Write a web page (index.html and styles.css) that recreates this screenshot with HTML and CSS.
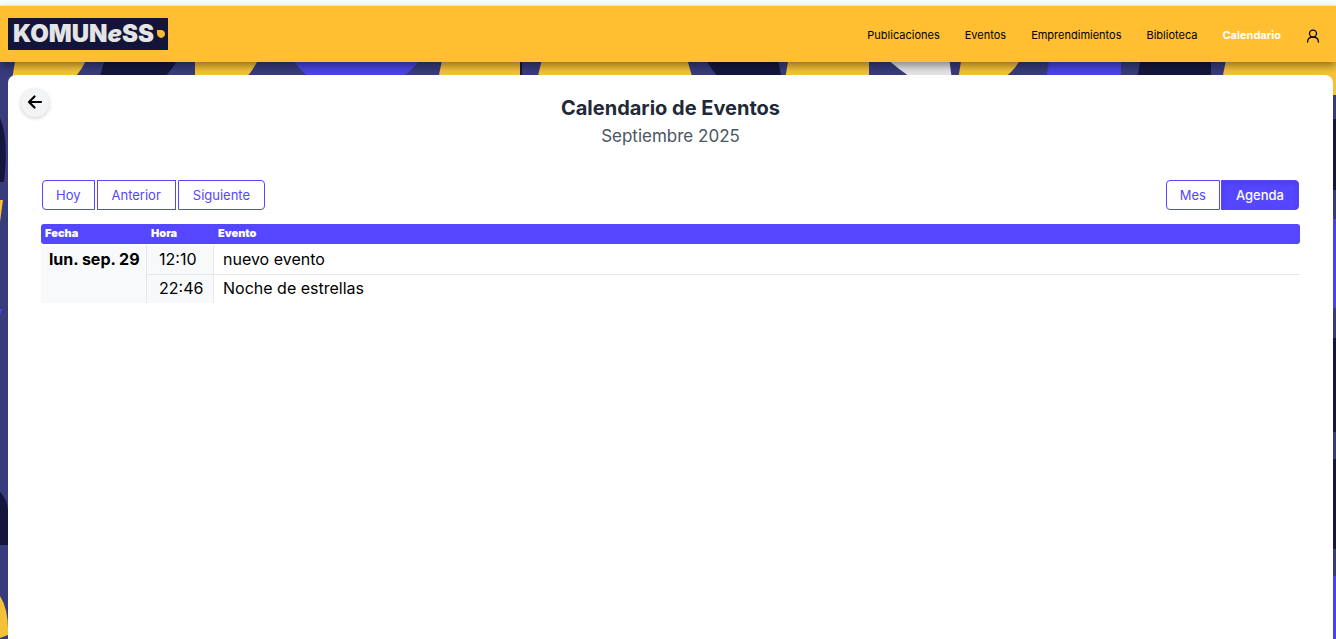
FILE: index.html
```html
<!DOCTYPE html>
<html lang="es">
<head>
<meta charset="utf-8">
<meta name="viewport" content="width=device-width, initial-scale=1">
<title>Calendario de Eventos</title>
<link rel="stylesheet" href="styles.css">
</head>
<body>
<svg class="backdrop" viewBox="0 0 1336 639" preserveAspectRatio="none" aria-hidden="true">
  <rect width="1336" height="639" fill="#383b7c"/>
  <g fill="#f4c138">
    <path d="M16 55L12 80H72Q83 70 88 55ZM195 55V80H244Q255 69 260 55ZM443 55L438 80H521V55ZM543 55L537 80H693L686 55ZM789 55L785 80H869V55ZM962 55L958 80H1001Q1015 71 1021 58ZM1227 55L1222 80V95H1336V55Z"/>
    <path d="M0 200H3L0 222ZM0 596Q9 610 8 635L0 638Z"/>
  </g>
  <g fill="#15163d">
    <path d="M106 55L99 80H162Q174 68 180 55ZM704 55Q710 69 721 80H782L777 55ZM1141 55L1137 80H1211V55ZM520 62H522V75H520ZM0 118Q9 138 4 182H0ZM0 492Q8 500 8 512V545H0Z"/>
    <path d="M1333 119H1336V190H1333ZM1333 338H1336V432H1333ZM1333 459H1336V549H1333Z"/>
  </g>
  <path d="M290 55Q298 70 313 80H397Q412 72 421 58ZM1050 55L1046 80H1121V55ZM0 309H2L0 316ZM1333 219H1336V308H1333ZM1333 576H1336V639H1333Z" fill="#4a44e5"/>
  <path d="M885 57Q899 70 915 80H952L949 57Z" fill="#e4e4e6"/>
</svg>

<header class="topbar">
  <a class="logo" href="#inicio" aria-label="Komuness">
    <span>KOMUN<i>e</i>SS</span>
    <svg width="8" height="8" viewBox="0 0 8 8" aria-hidden="true"><path d="M0 0H5Q8 1 8 4T4 8Q0 7 0 3Z" fill="#fbb92f"/></svg>
  </a>
  <nav class="nav" aria-label="Principal">
    <a href="#publicaciones">Publicaciones</a>
    <a href="#eventos">Eventos</a>
    <a href="#emprendimientos">Emprendimientos</a>
    <a href="#biblioteca">Biblioteca</a>
    <a class="active" href="#calendario" aria-current="page">Calendario</a>
    <a class="user" href="#perfil" aria-label="Perfil">
      <svg width="14" height="14" viewBox="0 0 14 14" fill="none" stroke="currentColor" stroke-width="1.3" stroke-linecap="round" aria-hidden="true"><circle cx="7" cy="4.6" r="3.5"/><path d="M1.6 13Q1.7 8.2 7 8.2T12.4 13"/></svg>
    </a>
  </nav>
</header>

<main class="card">
  <button class="back" type="button" aria-label="Volver">
    <svg width="16" height="16" viewBox="0 0 16 16" fill="none" stroke="#000" stroke-width="2.2" stroke-linecap="round" stroke-linejoin="round" aria-hidden="true"><path d="M14 8H2M7.5 2.5L2 8L7.5 13.5"/></svg>
  </button>
  <div class="heading">
    <h1>Calendario de Eventos</h1>
    <p>Septiembre 2025</p>
  </div>
  <div class="toolbar">
    <div class="group">
      <button type="button">Hoy</button>
      <button class="wide" type="button">Anterior</button>
      <button class="wide" type="button">Siguiente</button>
    </div>
    <div class="group views">
      <button type="button">Mes</button>
      <button class="wide selected" type="button" aria-pressed="true">Agenda</button>
    </div>
  </div>
  <table class="agenda">
    <thead>
      <tr><th class="date" scope="col">Fecha</th><th class="time" scope="col">Hora</th><th scope="col">Evento</th></tr>
    </thead>
    <tbody>
      <tr><th class="day" scope="rowgroup" rowspan="2">lun. sep. 29</th><td class="hour">12:10</td><td>nuevo evento</td></tr>
      <tr><td class="hour">22:46</td><td>Noche de estrellas</td></tr>
    </tbody>
  </table>
</main>
</body>
</html>
```
FILE: styles.css
```css
* {
  box-sizing: border-box;
}

body {
  margin: 0;
  padding-top: 5px;
  min-height: 100vh;
  display: flex;
  flex-direction: column;
  background: #fff;
  color: #000;
  font-family: Inter, "Open Sans", sans-serif;
}

button {
  font: inherit;
  cursor: pointer;
}

.backdrop {
  position: absolute;
  z-index: -1;
  top: 0;
  left: 0;
  width: 100%;
  height: 100%;
  clip-path: inset(5px 0 0);
}

.topbar {
  display: flex;
  align-items: center;
  justify-content: space-between;
  height: 57px;
  padding: 0 16px 0 8px;
  border-top: 1px solid #e5e7eb;
  background: #ffbf30;
  box-shadow: 0 4px 8px rgba(0, 0, 0, 0.4);
}

.logo {
  display: flex;
  align-items: center;
  justify-content: space-between;
  width: 160px;
  height: 32px;
  padding: 0 3px 0 5px;
  background: #12143a;
  color: #e4e4e4;
  font-size: 24px;
  font-weight: 900;
  line-height: 32px;
  text-decoration: none;
}

.nav {
  display: flex;
  align-items: center;
  gap: 25px;
  padding-top: 2px;
  font-size: 11px;
  font-weight: 400;
  line-height: 16px;
}

.nav a {
  color: #000;
  text-decoration: none;
}

.nav .active {
  color: #fff;
  font-weight: 700;
}

.nav .user {
  display: flex;
  padding-top: 2px;
}

.card {
  position: relative;
  flex: 1;
  margin: 13px 3px 0 8px;
  padding: 20px 33px;
  border-radius: 8px 8px 0 0;
  background: #fff;
}

.back {
  position: absolute;
  top: 14px;
  left: 13px;
  display: grid;
  place-items: center;
  width: 28px;
  height: 28px;
  padding: 0 0 2px;
  border: 0;
  border-radius: 50%;
  background: #f3f4f6;
  box-shadow: 0 1px 4px rgba(0, 0, 0, 0.2);
}

.heading {
  text-align: center;
}

.heading h1 {
  margin: 0;
  color: #1f2937;
  font-size: 20px;
  font-weight: 700;
  line-height: 26px;
}

.heading p {
  margin: 3px 0 0;
  color: #4b5563;
  font-size: 17px;
  line-height: 24px;
}

.toolbar {
  display: flex;
  justify-content: space-between;
  margin: 32px 1px 14px;
}

.group {
  display: flex;
  gap: 2px;
}

.views {
  gap: 1px;
}

.group button {
  height: 30px;
  padding: 0 13px;
  border: 1px solid #5546ff;
  background: #fff;
  color: #5546ff;
  font-size: 13px;
  line-height: 28px;
}

.group .wide {
  padding: 0 14px;
}

.group button:first-child {
  border-radius: 4px 0 0 4px;
}

.group button:last-child {
  border-radius: 0 4px 4px 0;
}

.group .selected {
  background: #5546ff;
  color: #fff;
  font-weight: 500;
  box-shadow: inset 0 2px 5px rgba(0, 0, 0, 0.12);
}

.agenda {
  width: 100%;
  border-collapse: separate;
  border-spacing: 0;
  table-layout: fixed;
  font-size: 16px;
  line-height: 20px;
  text-align: left;
}

.agenda thead th {
  padding: 0 4px 2px;
  background: #5546ff;
  color: #fff;
  font-size: 11px;
  font-weight: 900;
  line-height: 18px;
}

.agenda thead th:first-child {
  border-radius: 3px 0 0 3px;
}

.agenda thead th:last-child {
  border-radius: 0 3px 3px 0;
}

.agenda .date {
  width: 106px;
}

.agenda .time {
  width: 67px;
}

.agenda tbody td {
  height: 28px;
  padding: 3px 9px 5px;
}

.agenda tbody tr:first-child > * {
  border-top: 2px solid #fff;
}

.agenda tbody tr:first-child td {
  height: 31px;
  border-bottom: 1px solid #e5e7eb;
}

.agenda .day {
  padding: 3px 7px 5px 8px;
  border-right: 1px solid #e5e7eb;
  background: #f8f9fb;
  font-weight: 700;
  vertical-align: top;
  white-space: nowrap;
}

.agenda tbody .hour {
  padding-left: 12px;
  border-right: 1px solid #e5e7eb;
  background: #f8f9fb;
}
```
